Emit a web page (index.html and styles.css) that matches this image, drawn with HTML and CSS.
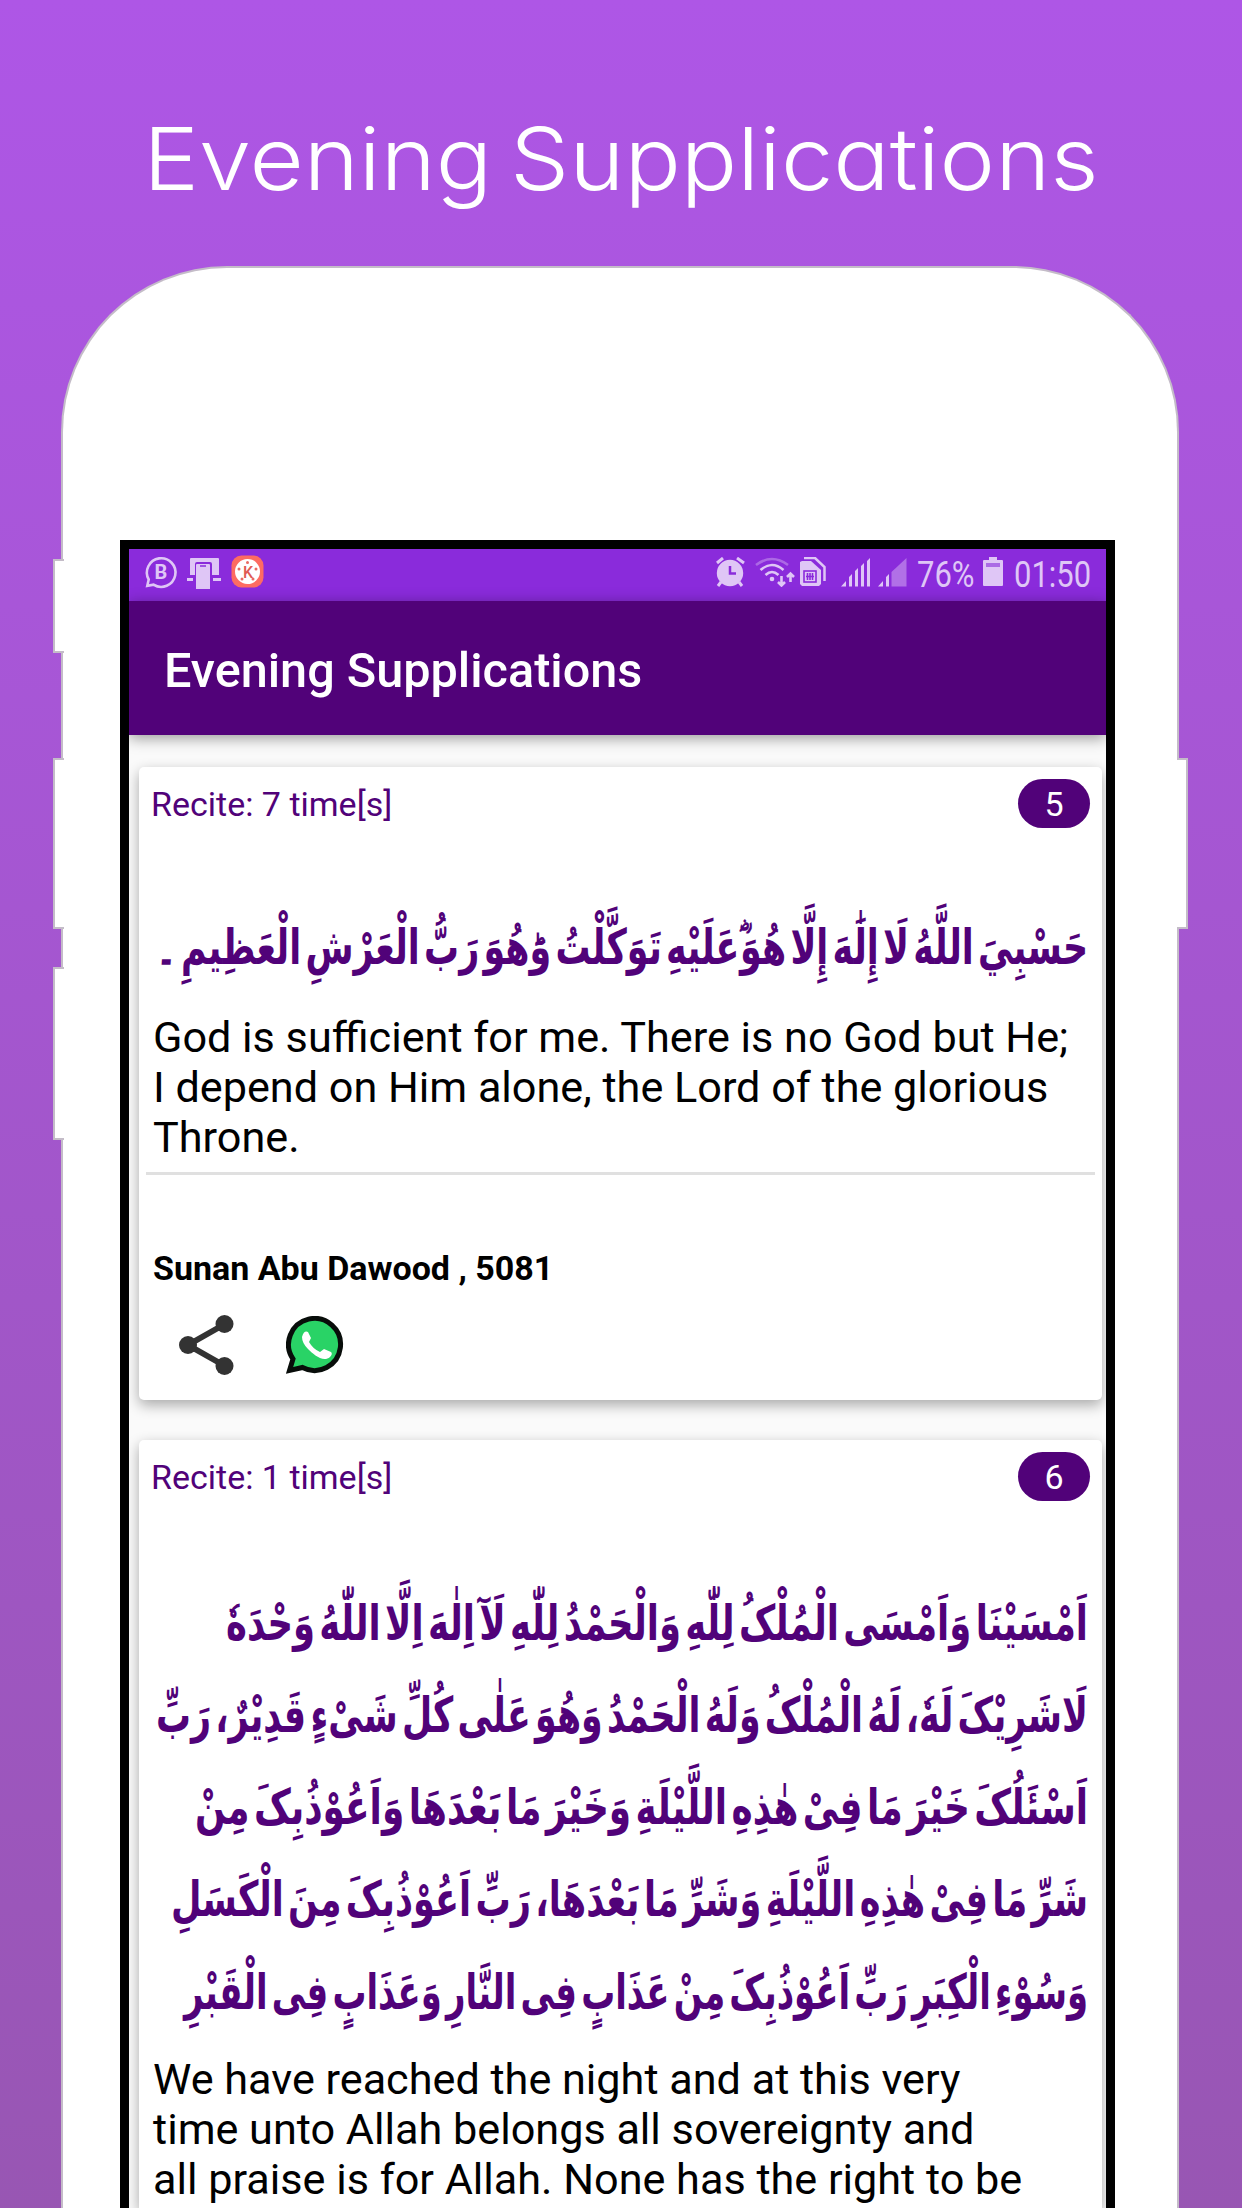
FILE: index.html
```html
<!DOCTYPE html>
<html lang="en">
<head>
<meta charset="utf-8">
<title>Evening Supplications</title>
<link rel="stylesheet" href="styles.css">
</head>
<body>
<h1 class="headline">Evening Supplications</h1>
<div class="phone">
  <i class="key key-a"></i><i class="key key-b"></i><i class="key key-c"></i><i class="key key-d"></i>
  <main class="screen">
    <div class="status">
      <svg class="status-icons" viewBox="0 0 140 52" width="140" height="52">
        <path d="M18.300 36.800L19.700 30.500A14.300 14.300 0 1 1 24.500 35.600Z" fill="none" stroke="#dfc6f6" stroke-width="2.600"/>
        <text x="25.500" y="30" font-size="20" class="mono-b">B</text>
        <path fill="#dfc6f6" d="M61 26V10Q61 9 62 9H89Q90 9 90 10V26H83V15Q83 13 81 13H68Q66 13 66 15V26ZM58 29H64V32H58ZM84 29H92V32H84ZM67 16Q67 15 68 15H80Q81 15 81 16V40H67Z"/><path d="M71 17H77" stroke="#8a2bdb" stroke-width="1.500"/>
        <rect x="102.500" y="6.500" width="32" height="32" rx="10" fill="#fd6b62"/><circle cx="118.500" cy="22.500" r="12.500" fill="#fff"/>
        <text x="114" y="28.500" font-size="16" class="k">K</text>
        <g fill="#e86a61"><circle cx="118.500" cy="13.500" r="1.500"/><circle cx="110" cy="20" r="1.500"/><circle cx="127" cy="20" r="1.500"/><circle cx="113" cy="30" r="1.500"/><circle cx="124" cy="30" r="1.500"/></g>
      </svg>
      <div class="status-right">
        <svg viewBox="0 0 194 30" width="194" height="30" fill="#dfc6f6">
          <circle cx="14" cy="16" r="13.200"/><path d="M14 9V16.500H20" fill="none" stroke="#8a2bdb" stroke-width="2.500"/><path d="M1 6L7 1M21 1L28 6M5 25L2 29M23 25L26 29" stroke="#dfc6f6" stroke-width="3"/>
          <g fill="none" stroke="#dfc6f6" stroke-width="2.600"><path d="M40 8Q56-4 72 8" opacity=".4"/><path d="M44.500 13Q56 3 67.500 13M49.500 18Q56 12 62.500 18"/><path d="M65.500 19V28M62 25L65.500 28.500L69 25M74.500 25V17M71 20L74.500 16.500L78 20"/></g><circle cx="56" cy="22" r="2.300"/>
          <path d="M84 5L86 4H95L105 13V27L103 29H86L84 27Z"/><path d="M88 1H99L108.500 10V24" fill="none" stroke="#dfc6f6" stroke-width="2.500"/><g fill="none" stroke="#8a2bdb" stroke-width="1.600"><rect x="88" y="14" width="12" height="11"/><path d="M91.500 16V23M94 16V23M96.500 16V23M90 19.500H98"/></g>
          <path d="M125 29.500L130 24V29.500ZM133 29.500V20L136 17V29.500ZM139 29.500V14L142 11V29.500ZM145 29.500V9L148 6V29.500ZM151 29.500V4L154 1V29.500Z"/><path d="M162 29.500L167 24V29.500ZM170 29.500V20L173 17V29.500Z"/><path d="M175.500 29.500V15L190.500 1V29.500Z" opacity=".45"/>
        </svg>
        <span class="st-text pct">76%</span>
        <svg class="batt" viewBox="0 0 20 29" width="20" height="29"><path fill="#dfc6f6" d="M0 4Q0 3 1 3H6V0H14V3H19Q20 3 20 4V28Q20 29 19 29H1Q0 29 0 28Z"/><path fill="#ab6be5" d="M3 6H17V10H3Z"/></svg>
        <span class="st-text clock">01:50</span>
      </div>
    </div>
    <header class="appbar">Evening Supplications</header>
    <article class="card first">
      <div class="row"><span class="recite">Recite: 7 time[s]</span><span class="badge">5</span></div>
      <svg class="arabic" width="963" height="171" lang="ar">
        <text x="949" y="136" textLength="932" lengthAdjust="spacingAndGlyphs">حَسْبِيَ اللَّهُ لَا إِلَٰهَ إِلَّا هُوَ ؓعَلَيْهِ تَوَكَّلْتُ وَؕهُوَ رَبُّ الْعَرْشِ الْعَظِيمِ ۔</text>
      </svg>
      <p class="english">God is sufficient for me. There is no God but He;<br>I depend on Him alone, the Lord of the glorious<br>Throne.</p>
      <hr>
      <div class="source">Sunan Abu Dawood , 5081</div>
      <div class="actions">
        <svg viewBox="0 0 56 62" width="56" height="62"><path d="M47 10L10 31L47 52" fill="none" stroke="#333" stroke-width="6"/><g fill="#333"><circle cx="46.500" cy="10" r="9"/><circle cx="10" cy="31" r="9"/><circle cx="46.500" cy="52" r="9"/></g></svg>
        <svg viewBox="0 0 58 58" width="58" height="58"><path d="M3.500 54.500L7 43A26 26 0 1 1 16.500 51.500Z" fill="#29d366" stroke="#080d0a" stroke-width="5"/><path d="M16 21Q18 14 22 16L25 22L23 26Q27 33 34 36L38 33L45 36Q47 38 44 41C37 47 27 38 22 33Q16 27 16 21Z" fill="#fff"/></svg>
      </div>
    </article>
    <article class="card second">
      <div class="row"><span class="recite">Recite: 1 time[s]</span><span class="badge">6</span></div>
      <svg class="arabic" width="963" height="540" lang="ar">
        <text x="949" y="139" textLength="862" lengthAdjust="spacingAndGlyphs">اَمْسَيْنَا وَاَمْسَى الْمُلْکُ لِلّٰهِ وَالْحَمْدُ لِلّٰهِ لَآ اِلٰهَ اِلَّا اللّٰهُ وَحْدَهٗ</text>
        <text x="949" y="231" textLength="932" lengthAdjust="spacingAndGlyphs">لَاشَرِيْکَ لَهٗ، لَهُ الْمُلْکُ وَلَهُ الْحَمْدُ وَهُوَ عَلٰى كُلِّ شَیْءٍ قَدِيْرٌ، رَبِّ</text>
        <text x="949" y="323" textLength="893" lengthAdjust="spacingAndGlyphs">اَسْئَلُکَ خَيْرَ مَا فِیْ هٰذِهِ اللَّيْلَةِ وَخَيْرَ مَا بَعْدَهَا وَاَعُوْذُبِکَ مِنْ</text>
        <text x="949" y="415" textLength="917" lengthAdjust="spacingAndGlyphs">شَرِّ مَا فِیْ هٰذِهِ اللَّيْلَةِ وَشَرِّ مَا بَعْدَهَا، رَبِّ اَعُوْذُبِکَ مِنَ الْکَسَلِ</text>
        <text x="949" y="508" textLength="904" lengthAdjust="spacingAndGlyphs">وَسُوْءِ الْکِبَرِ رَبِّ اَعُوْذُبِکَ مِنْ عَذَابٍ فِی النَّارِ وَعَذَابٍ فِی الْقَبْرِ</text>
      </svg>
      <p class="english">We have reached the night and at this very<br>time unto Allah belongs all sovereignty and<br>all praise is for Allah. None has the right to be</p>
    </article>
  </main>
</div>
</body>
</html>
```
FILE: styles.css
```css
* { box-sizing: border-box; }
html, body { height: 2208px; overflow: hidden; }
body { margin: 0; background: linear-gradient(#ae56e6, #9856b3); font-family: Roboto, sans-serif; }
.headline { margin: 0; height: 266px; padding-top: 97px; text-align: center; font: 300 87px/124px Inter, sans-serif; font-feature-settings: "cv11"; color: #fff; white-space: nowrap; word-spacing: -8px; transform: scaleX(1.077); }
.phone { position: relative; width: 1118px; height: 1942px; margin-left: 61px; padding: 272px 0 0 57px; background: #fff; border: 2px solid #c4bcc8; border-bottom: 0; border-radius: 166px 166px 0 0; }
.key { position: absolute; width: 11px; background: #fff; border: 2px solid #c4bcc8; border-right: 0; left: -10px; }
.key-a { top: 291px; height: 94px; }
.key-b { top: 490px; height: 171px; }
.key-c { top: 699px; height: 173px; }
.key-d { top: 490px; height: 171px; left: auto; right: -11px; border: 2px solid #c4bcc8; border-left: 0; }
.screen { width: 995px; height: 1668px; border: 9px solid #000; border-bottom: 0; background: #fafafa; overflow: hidden; }
.status { height: 52px; background: #8a2bdb; display: flex; justify-content: space-between; }
.mono-b { fill: #dfc6f6; font-weight: 700; }
.k { fill: #e05a52; font-weight: 500; }
.status-right { display: flex; align-items: flex-start; padding: 8px 16px 0 0; }
.st-text { color: #dfc6f6; font: 400 36px/36px Roboto, sans-serif; transform-origin: 0 0; white-space: nowrap; }
.pct { width: 57px; margin-left: 7px; transform: scaleX(.86); }
.batt { margin-left: 9px; }
.clock { width: 76px; margin-left: 11px; transform: scaleX(.86); }
.appbar { height: 134px; padding: 3px 0 0 35px; background: #510279; color: #fff; font-size: 48.600px; font-weight: 500; line-height: 134px; box-shadow: 0 3px 14px rgba(0,0,0,.4); position: relative; }
.card { width: 963px; margin-left: 10px; background: #fff; border-radius: 5px; box-shadow: 0 5px 14px rgba(0,0,0,.33); }
.first { margin-top: 32px; height: 633px; }
.second { margin-top: 40px; height: 768px; border-radius: 5px 5px 0 0; }
.row { display: flex; justify-content: space-between; padding: 12px 12px 0 12px; height: 61px; }
.recite { color: #510279; font-size: 34px; line-height: 51px; }
.badge { width: 72px; height: 49px; border-radius: 25px; background: #510279; color: #fff; text-align: center; font-size: 34px; line-height: 51px; }
.arabic { display: block; overflow: visible; }
.arabic text { font: 700 49px "DejaVu Sans", sans-serif; fill: #510279; text-anchor: end; word-spacing: -11px; }
.english { margin: 0; padding: 14px 0 0 14px; font-size: 43.200px; line-height: 50.200px; color: #000; white-space: nowrap; }
hr { border: 0; height: 3px; margin: 8px 7px 0; background: #e0e0e0; }
.source { margin: 73px 0 0 14px; font-weight: 700; font-size: 34px; line-height: 40px; }
.actions { display: flex; align-items: center; gap: 52px; padding: 26px 0 0 39px; }
.actions svg { display: block; }
```
